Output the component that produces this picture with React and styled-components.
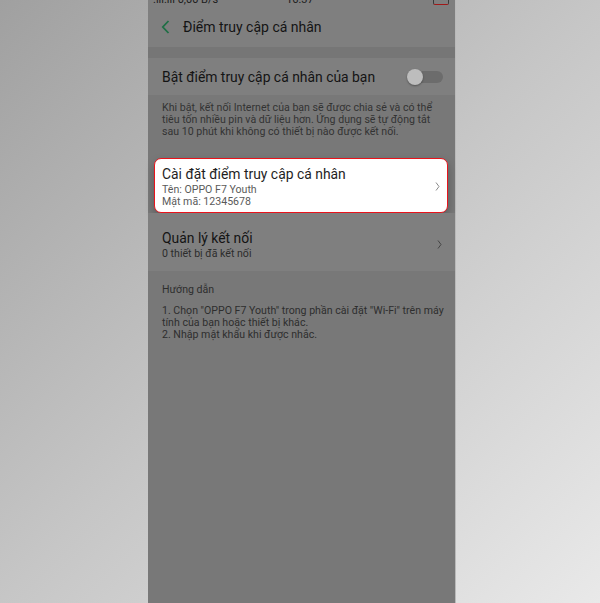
import React from "react";
import styled, { createGlobalStyle } from "styled-components";

const GlobalStyle = createGlobalStyle`
  html, body {
    margin: 0;
    padding: 0;
  }
  body {
    font-family: Roboto, "Noto Sans", sans-serif;
  }
`;

const Page = styled.div`
  width: 600px;
  height: 603px;
  display: flex;
  overflow: hidden;
  background: linear-gradient(135deg, #a0a0a0 0%, #c6c6c6 50%, #e9e9e9 100%);
`;

const Phone = styled.div`
  margin-left: 148px;
  width: 307px;
  height: 603px;
  display: flex;
  flex-direction: column;
  background: #787878;
  border-right: 1px solid #b9b9b9;
`;

const StatusBar = styled.div`
  height: 6px;
  overflow: hidden;
  background: #7f7f7f;
  display: flex;
  align-items: flex-end;
  padding: 0 6px 0 5px;
  font-size: 11px;
  color: #1c1c1c;
  line-height: 14px;
`;

const StatusText = styled.span`
  margin-left: ${(p) => p.$gap || 0}px;
  margin-bottom: -1px;
  white-space: nowrap;
`;

const Battery = styled.span`
  margin-left: auto;
  width: 14px;
  height: 10px;
  border: 1px solid #3a3a3a;
  border-bottom-color: #a01818;
  border-radius: 2px;
  margin-bottom: 1px;
`;

const Header = styled.div`
  height: 41px;
  background: #7f7f7f;
  display: flex;
  align-items: center;
  padding-left: 13px;
  gap: 13px;
`;

const Title = styled.div`
  font-size: 14px;
  color: #141414;
`;

const Band = styled.div`
  height: 11px;
  background: #767676;
`;

const Row = styled.div`
  background: #7f7f7f;
  height: ${(p) => p.$h}px;
  display: flex;
  align-items: center;
  justify-content: space-between;
  padding: ${(p) => p.$top || 0}px 13px 0 14px;
  box-sizing: border-box;
`;

const RowText = styled.div`
  display: flex;
  flex-direction: column;
`;

const MainLabel = styled.div`
  font-size: 13.9px;
  color: ${(p) => (p.$light ? "#1e1e1e" : "#141414")};
  line-height: 20px;
  white-space: nowrap;
`;

const SubLabel = styled.div`
  font-size: 10.6px;
  line-height: 12px;
  white-space: nowrap;
  color: ${(p) => (p.$light ? "#5a5a5a" : "#2c2c2c")};
`;

const Toggle = styled.div`
  position: relative;
  width: 28px;
  height: 12px;
  border-radius: 6px;
  background: #6c6c6c;
  margin-right: -1px;
`;

const Knob = styled.span`
  position: absolute;
  left: -8px;
  top: -2px;
  width: 16px;
  height: 16px;
  border-radius: 50%;
  background: #bdbdbd;
  box-shadow: 0 1px 2px rgba(0, 0, 0, 0.35);
`;

const Note = styled.div`
  padding: 7px 14px 0;
  height: 60px;
  box-sizing: border-box;
  font-size: 10.6px;
  line-height: 12px;
  color: #333;
  white-space: nowrap;
`;

const CardSlot = styled.div`
  padding: 3px 7px 0 6px;
`;

const Card = styled.div`
  height: 55px;
  box-sizing: border-box;
  background: #fff;
  border: 1.5px solid #e8141c;
  border-radius: 7px;
  box-shadow: 0 4px 8px rgba(0, 0, 0, 0.25);
  display: flex;
  align-items: center;
  justify-content: space-between;
  padding: 1px 7px 0 7px;
`;

const Guide = styled.div`
  padding: 13px 14px 0;
  font-size: 10.6px;
  line-height: 12px;
  color: #2e2e2e;
  white-space: nowrap;
`;

const GuideHead = styled.div`
  margin-bottom: 9px;
`;

const Back = () => (
  <svg width="9" height="14" viewBox="0 0 9 14">
    <path d="M7.5 1 L1.8 7 L7.5 13" fill="none" stroke="#1f6f45" strokeWidth="1.8" />
  </svg>
);

const Chevron = ({ color }) => (
  <svg width="5" height="9" viewBox="0 0 5 9">
    <path d="M1 0.5 L4 4.5 L1 8.5" fill="none" stroke={color} strokeWidth="1" />
  </svg>
);

export default function App() {
  return (
    <>
      <GlobalStyle />
      <Page>
        <Phone>
          <StatusBar>
            <StatusText>.ıll.ıll 0,00 B/s</StatusText>
            <StatusText $gap={68}>16:37</StatusText>
            <Battery />
          </StatusBar>
          <Header>
            <Back />
            <Title>Điểm truy cập cá nhân</Title>
          </Header>
          <Band />
          <Row $h={37}>
            <MainLabel>Bật điểm truy cập cá nhân của bạn</MainLabel>
            <Toggle>
              <Knob />
            </Toggle>
          </Row>
          <Note>
            Khi bật, kết nối Internet của bạn sẽ được chia sẻ và có thể
            <br />
            tiêu tốn nhiều pin và dữ liệu hơn. Ứng dụng sẽ tự động tắt
            <br />
            sau 10 phút khi không có thiết bị nào được kết nối.
          </Note>
          <CardSlot>
            <Card>
              <RowText>
                <MainLabel $light>Cài đặt điểm truy cập cá nhân</MainLabel>
                <SubLabel $light>Tên: OPPO F7 Youth</SubLabel>
                <SubLabel $light>Mật mã: 12345678</SubLabel>
              </RowText>
              <Chevron color="#8a8a8a" />
            </Card>
          </CardSlot>
          <Row $h={58} $top={4}>
            <RowText>
              <MainLabel>Quản lý kết nối</MainLabel>
              <SubLabel>0 thiết bị đã kết nối</SubLabel>
            </RowText>
            <Chevron color="#444" />
          </Row>
          <Guide>
            <GuideHead>Hướng dẫn</GuideHead>
            1. Chọn "OPPO F7 Youth" trong phần cài đặt "Wi-Fi" trên máy
            <br />
            tính của bạn hoặc thiết bị khác.
            <br />
            2. Nhập mật khẩu khi được nhắc.
          </Guide>
        </Phone>
      </Page>
    </>
  );
}
